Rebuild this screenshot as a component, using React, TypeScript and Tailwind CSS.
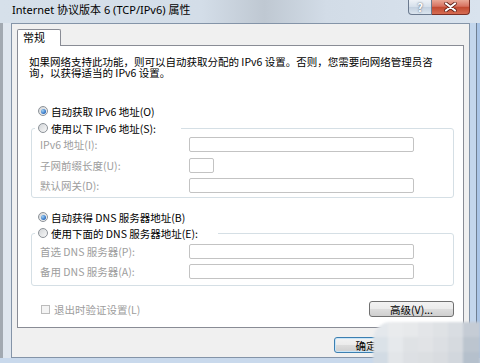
import React from "react";

function Radio({ checked }: { checked?: boolean }) {
  return (
    <span className="flex h-[10px] w-[10px] shrink-0 items-center justify-center rounded-full border border-[#8c9298] bg-[linear-gradient(135deg,#d2d5d8,#f8f8f8)]">
      {checked && (
        <span className="h-[5px] w-[5px] rounded-full bg-[radial-gradient(circle_at_35%_35%,#9fd0f5,#2a6cc0_70%)]" />
      )}
    </span>
  );
}

function Field({ small }: { small?: boolean }) {
  return (
    <div
      className={
        small
          ? "h-[15px] w-[25px] shrink-0 rounded-[2px] border border-[#c3c3c3] bg-white"
          : "h-[15px] w-[225px] shrink-0 rounded-[2px] border border-[#c3c3c3] bg-white"
      }
    />
  );
}

const cells = [
  "bg-[#e4e8ec]", "bg-[#e9ebed]", "bg-[#e7e9eb]", "bg-[#e3e5e8]", "bg-[#dfe2e5]", "bg-[#d9dde2]", "bg-[#c5ccd5]",
  "bg-[#dbe2e8]", "bg-[#e6e9ec]", "bg-[#dfe2e5]", "bg-[#e1e3e6]", "bg-[#dcdfe3]", "bg-[#d6dadf]", "bg-[#bcc5cf]",
  "bg-[#d2dbe4]", "bg-[#e3e6e9]", "bg-[#dde0e4]", "bg-[#dcdfe2]", "bg-[#d9dce0]", "bg-[#d2d7dd]", "bg-[#b5c0cc]",
];

export default function App() {
  return (
    <div className="relative flex h-[363px] w-[480px] flex-col overflow-hidden bg-[#d7e1ec] font-['Noto_Sans_CJK_SC',sans-serif] text-black">
      {/* title bar */}
      <div className="flex h-[23px] shrink-0 items-start bg-[linear-gradient(90deg,#d6e0ea_0%,#d3dde8_42%,#bfc8d2_55%,#d2dce7_68%,#d9e3ee_100%)]">
        <div className="pl-[12px] pt-[4px] font-['Noto_Sans','Noto_Sans_CJK_SC',sans-serif] text-[11px] leading-[12px] whitespace-nowrap">
          Internet 协议版本 6 (TCP/IPv6) 属性
        </div>
        <div className="ml-auto mr-[10px] flex h-[15px]">
          <div className="flex h-[15px] w-[24px] items-center justify-center rounded-bl-[4px] border border-t-0 border-[#6b7a8f] bg-[linear-gradient(#eef2f7,#d5dfea_50%,#c3d0df_51%,#dbe5ef)] text-[11px] font-bold leading-none text-white [text-shadow:0_0_2px_#3b4657]">
            ?
          </div>
          <div className="flex h-[15px] w-[38px] items-center justify-center rounded-br-[4px] border border-l-0 border-t-0 border-[#7b2f25] bg-[linear-gradient(#e9a896,#d77260_45%,#c24a31_52%,#d66c52)]">
            <svg width="13" height="10" viewBox="0 0 13 10">
              <path d="M2 1.5 L11 8.5 M11 1.5 L2 8.5" stroke="#5a1d14" strokeWidth="3.6" strokeLinecap="round" />
              <path d="M2 1.5 L11 8.5 M11 1.5 L2 8.5" stroke="#ffffff" strokeWidth="2.2" strokeLinecap="round" />
            </svg>
          </div>
        </div>
      </div>

      {/* middle */}
      <div className="flex min-h-0 flex-1">
        <div className="w-[11px] shrink-0 border-l-[3px] border-[#a2a9b1] bg-[#dfe6ee]" />
        <div className="flex w-[459px] shrink-0 flex-col border border-[#8494a8] bg-[#f0f0f0] px-[5px] pt-[5px]">
          {/* tab strip */}
          <div className="flex h-[16px]">
            <div className="relative z-10 h-[17px] w-[44px] rounded-t-[2px] border border-b-0 border-[#898c95] bg-white pl-[5px] text-[11px] leading-[15px]">
              常规
            </div>
          </div>
          {/* tab panel */}
          <div className="flex flex-col border border-[#898c95] bg-white text-[10.5px] leading-[11px]">
            <div className="ml-[11px] mt-[10px] whitespace-nowrap">
              <div>如果网络支持此功能，则可以自动获取分配的 IPv6 设置。否则，您需要向网络管理员咨</div>
              <div>询，以获得适当的 IPv6 设置。</div>
            </div>

            <div className="ml-[20px] mt-[26px] flex h-[14px] items-center gap-[3px] whitespace-nowrap">
              <Radio checked />
              <span>自动获取 IPv6 地址(O)</span>
            </div>

            <div className="ml-[13px] mr-[9px] mt-[10px] rounded-[3px] border border-[#d5dfe5] pb-[4px]">
              <div className="-mt-[8px] ml-[3px] flex h-[14px] w-[146px] items-center gap-[3px] whitespace-nowrap bg-white pl-[3px]">
                <Radio />
                <span>使用以下 IPv6 地址(S):</span>
              </div>
              <div className="mt-[2px] flex flex-col pl-[8px] text-[#9d9d9d]">
                <div className="mb-[6px] flex h-[15px] items-center">
                  <span className="w-[149px] shrink-0 whitespace-nowrap">IPv6 地址(I):</span>
                  <Field />
                </div>
                <div className="mb-[5px] flex h-[15px] items-center">
                  <span className="w-[149px] shrink-0 whitespace-nowrap">子网前缀长度(U):</span>
                  <Field small />
                </div>
                <div className="flex h-[15px] items-center">
                  <span className="w-[149px] shrink-0 whitespace-nowrap">默认网关(D):</span>
                  <Field />
                </div>
              </div>
            </div>

            <div className="ml-[20px] mt-[12px] flex h-[14px] items-center gap-[3px] whitespace-nowrap">
              <Radio checked />
              <span>自动获得 DNS 服务器地址(B)</span>
            </div>

            <div className="ml-[13px] mr-[9px] mt-[9px] rounded-[3px] border border-[#d5dfe5] pb-[6px]">
              <div className="-mt-[8px] ml-[3px] flex h-[14px] w-[183px] items-center gap-[3px] whitespace-nowrap bg-white pl-[3px]">
                <Radio />
                <span>使用下面的 DNS 服务器地址(E):</span>
              </div>
              <div className="mt-[4px] flex flex-col pl-[8px] text-[#9d9d9d]">
                <div className="mb-[5px] flex h-[15px] items-center">
                  <span className="w-[149px] shrink-0 whitespace-nowrap">首选 DNS 服务器(P):</span>
                  <Field />
                </div>
                <div className="flex h-[15px] items-center">
                  <span className="w-[149px] shrink-0 whitespace-nowrap">备用 DNS 服务器(A):</span>
                  <Field />
                </div>
              </div>
            </div>

            <div className="mb-[10px] mt-[15px] flex h-[16px] items-center pl-[23px] pr-[9px]">
              <span className="h-[9px] w-[9px] shrink-0 border border-[#bcbcbc] bg-[#f4f4f4]" />
              <span className="ml-[4px] whitespace-nowrap text-[#9d9d9d]">退出时验证设置(L)</span>
              <div className="ml-auto flex h-[16px] w-[85px] items-center justify-center rounded-[3px] border border-[#707070] bg-[linear-gradient(#f3f3f3,#ebebeb_50%,#dddddd_51%,#cfcfcf)] whitespace-nowrap">
                高级(V)...
              </div>
            </div>
          </div>

          {/* dialog buttons */}
          <div className="mt-[9px] flex text-[10.5px] leading-[11px]">
            <div className="ml-auto flex h-[16px] w-[64px] items-center justify-center rounded-[3px] border border-[#3c7fb1] bg-[linear-gradient(#f3f3f3,#ebebeb_50%,#dddddd_51%,#cfcfcf)] shadow-[inset_0_0_0_1px_#c8e5f8]">
              确定
            </div>
            <div className="ml-[2px] flex h-[16px] w-[64px] items-center justify-center rounded-[3px] border border-[#707070] bg-[linear-gradient(#f3f3f3,#ebebeb_50%,#dddddd_51%,#cfcfcf)]">
              取消
            </div>
          </div>
        </div>
        <div className="flex w-[10px] shrink-0 bg-[#c3d6ec]">
          <div className="w-[6px]" />
          <div className="w-[1px] bg-[#6f7f92]" />
          <div className="flex-1 bg-[#a9c4e6]" />
        </div>
      </div>
      <div className="h-[5px] shrink-0 bg-[#c9d9ec]" />

      {/* watermark mosaic overlay */}
      <div className="absolute left-[373px] top-[322px] grid h-[45px] w-[107px] grid-cols-[15px_15px_15px_15px_15px_15px_17px] grid-rows-[15px_15px_15px] overflow-hidden rounded-tl-[18px] blur-[1px]">
        {cells.map((c, i) => (
          <div key={i} className={c} />
        ))}
      </div>
    </div>
  );
}
